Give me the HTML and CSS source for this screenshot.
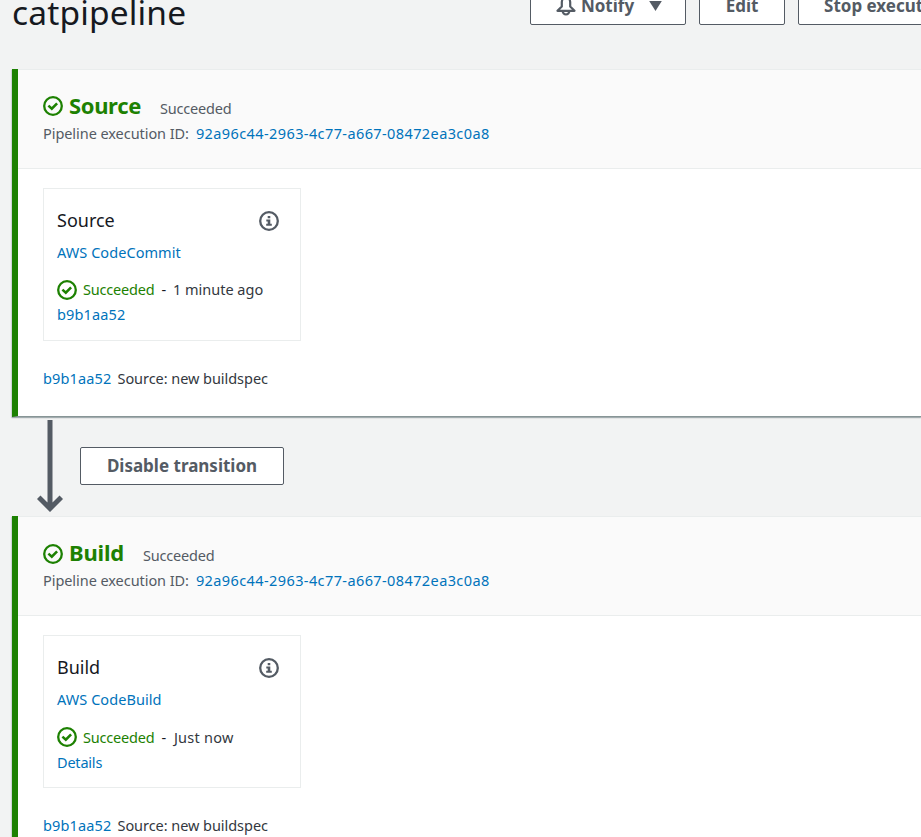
FILE: index.html
```
<!DOCTYPE html>
<html lang="en">
<head>
<meta charset="utf-8">
<title>catpipeline</title>
<link rel="stylesheet" href="styles.css">
</head>
<body>
<svg class="defs" aria-hidden="true">
  <symbol id="check" viewBox="0 0 20 20"><circle cx="10" cy="10" r="8.8"/><path d="M5.400 9.600l3.400 3 5.300-5.200" stroke-width="2.600"/></symbol>
  <symbol id="info" viewBox="0 0 20 20"><circle cx="10" cy="10" r="8.8"/><path d="M8.700 5h2.600v2.200H8.700zM7.300 8.400h4v4.400h1.500v2H7.200v-2h1.500v-2.400H7.300z" fill="currentColor" stroke="none"/></symbol>
</svg>
<header class="page-head">
  <h1>catpipeline</h1>
  <div class="actions">
    <button class="btn notify"><svg class="bell" viewBox="0 0 20 20"><path d="M1.500 14.800h17L14.200 10.500V6.500a4.200 5 0 0 0-8.400 0v4zM6.700 15a3.300 3.500 0 0 0 6.600 0"/></svg><span>Notify</span><svg class="caret" viewBox="0 0 13 10"><path d="M.2 0h12.600L6.500 10z"/></svg></button>
    <button class="btn edit"><span>Edit</span></button>
    <button class="btn stop"><span>Stop execution</span></button>
  </div>
</header>
<main>
  <section class="stage">
    <div class="stage-head">
      <div class="title-row"><svg class="icon"><use href="#check"/></svg><h2 class="t-source">Source</h2><span class="state">Succeeded</span></div>
      <div class="execution"><span class="exec-label">Pipeline execution ID:</span><a class="exec-id">92a96c44-2963-4c77-a667-08472ea3c0a8</a></div>
    </div>
    <div class="stage-body">
      <article class="card">
        <div class="card-title"><h3>Source</h3><svg class="icon info"><use href="#info"/></svg></div>
        <a class="provider">AWS CodeCommit</a>
        <div class="status"><svg class="icon"><use href="#check"/></svg><span class="ok">Succeeded</span><span class="dash">-</span><span class="ago">1 minute ago</span></div>
        <a class="detail hash">b9b1aa52</a>
      </article>
      <div class="revision"><a class="hash">b9b1aa52</a><span class="message">Source: new buildspec</span></div>
    </div>
  </section>
  <div class="transition">
    <svg class="arrow" viewBox="0 0 26 92"><path d="M13 0v87M1.700 77.200L13 88.500l11.300-11.300"/></svg>
    <button class="btn disable"><span>Disable transition</span></button>
  </div>
  <section class="stage build">
    <div class="stage-head">
      <div class="title-row"><svg class="icon"><use href="#check"/></svg><h2 class="t-build">Build</h2><span class="state">Succeeded</span></div>
      <div class="execution"><span class="exec-label">Pipeline execution ID:</span><a class="exec-id">92a96c44-2963-4c77-a667-08472ea3c0a8</a></div>
    </div>
    <div class="stage-body">
      <article class="card">
        <div class="card-title"><h3>Build</h3><svg class="icon info"><use href="#info"/></svg></div>
        <a class="provider">AWS CodeBuild</a>
        <div class="status"><svg class="icon"><use href="#check"/></svg><span class="ok">Succeeded</span><span class="dash">-</span><span class="ago">Just now</span></div>
        <a class="detail">Details</a>
      </article>
      <div class="revision"><a class="hash">b9b1aa52</a><span class="message">Source: new buildspec</span></div>
    </div>
  </section>
</main>
</body>
</html>
```
FILE: styles.css
```
* { box-sizing: border-box; }
html, body { height: 837px; overflow: hidden; }
body { margin: 0; background: #f2f3f3; color: #16191f; font: 14.5px/25px "Noto Sans", sans-serif; letter-spacing: -.2px; }
h1, h2, h3 { margin: 0; font-weight: 400; }
a { color: #0073bb; }
svg { flex: none; }
.defs { display: none; }
.page-head { display: flex; height: 69px; padding-left: 12px; align-items: flex-start; }
.page-head h1 { flex: none; width: 518px; margin-top: -10px; font-size: 33.5px; line-height: 45px; letter-spacing: .15px; }
.actions { display: flex; gap: 13px; flex: none; margin-top: -13px; }
.btn { display: flex; align-items: center; justify-content: center; flex: none; height: 38px; padding: 0 0 2px; border: 1px solid #545b64; border-radius: 2px; background: #fff; color: #545b64; font: 700 17px/25px "Noto Sans", sans-serif; white-space: nowrap; }
.notify { width: 156px; padding-left: 2px; }
.edit { width: 86px; }
.stop { width: 178px; }
.bell { width: 20px; height: 20px; margin: 2px 5px 0 0; fill: none; stroke: #545b64; stroke-width: 2.200; stroke-linejoin: round; }
.caret { width: 13px; height: 10px; margin: 2px 0 0 15px; fill: #545b64; }
.icon { width: 20px; height: 20px; color: #1d8102; fill: none; stroke: currentColor; stroke-width: 2.300; }
.info { margin-top: 2px; color: #545b64; }
main { padding-left: 12px; }
.stage { height: 348px; border-left: 6px solid #1d8102; border-bottom: 1px solid #879596; background: #fff; box-shadow: 0 1px 1px rgba(0,28,36,.25), -1px 1px 1px rgba(0,28,36,.1); }
.stage-head { height: 100px; padding: 21px 0 0 25px; border: solid #eaeded; border-width: 1px 0; background: #fafafa; color: #545b64; }
.title-row { display: flex; height: 30px; align-items: center; }
.title-row h2 { margin: -3px 0 0 6px; color: #1d8102; font-weight: 700; font-size: 22px; line-height: 28px; }
.t-source { letter-spacing: -.35px; }
.state { margin: 4px 0 0 19px; }
.build .title-row .icon { margin-top: 1px; }
.execution { display: flex; gap: 7px; }
.exec-label { letter-spacing: -.06px; }
.exec-id { letter-spacing: .4px; }
.stage-body { padding: 19px 0 0 25px; }
.card { width: 258px; height: 153px; padding: 17px 13px 0; border: 1px solid #eaeded; }
.card-title { display: flex; height: 28px; align-items: center; justify-content: space-between; padding-right: 8px; }
.card-title h3 { font-size: 18px; letter-spacing: 0; }
.provider { display: block; margin-top: 6px; letter-spacing: .06px; }
.status { display: flex; align-items: center; height: 25px; margin-top: 12px; }
.build .status { height: 26px; }
.build .status span { padding-top: 1px; }
.ok { margin-left: 6px; color: #1d8102; }
.dash { margin: 0 7px; }
.ago { color: #333840; letter-spacing: 0; }
.build .ago { margin-left: 1px; letter-spacing: .25px; }
.detail { display: block; }
.hash { letter-spacing: .15px; }
.revision { display: flex; gap: 6px; margin-top: 25px; }
.message { color: #333840; letter-spacing: -.05px; }
.transition { display: flex; height: 99px; padding: 3px 0 0 25px; }
.arrow { width: 26px; height: 92px; fill: none; stroke: #545b64; stroke-width: 5; }
.disable { width: 204px; margin: 27px 0 0 17px; }
```
